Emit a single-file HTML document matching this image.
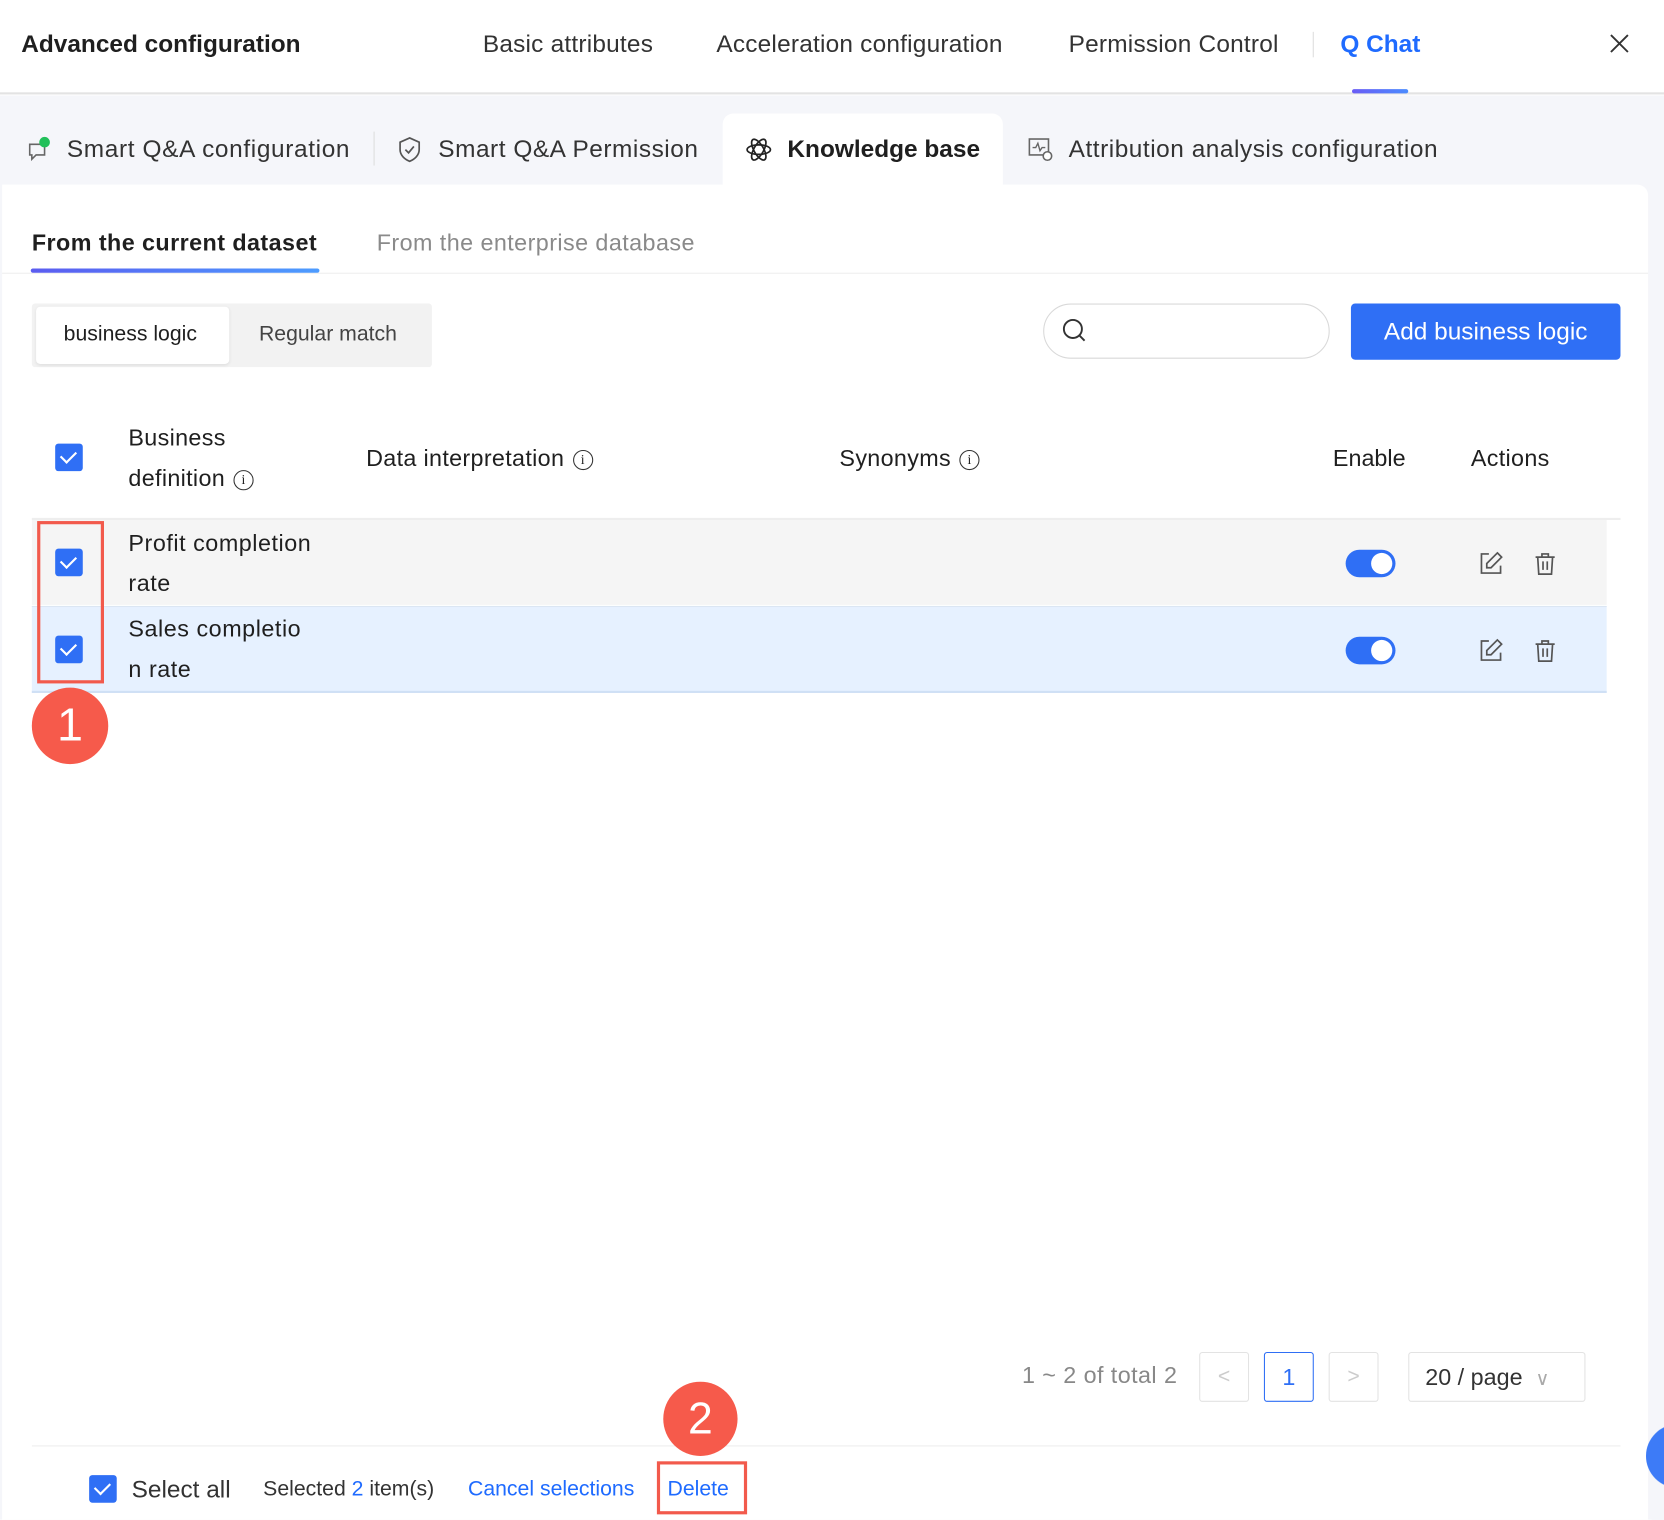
<!DOCTYPE html>
<html><head><meta charset="utf-8"><style>
*{box-sizing:border-box;margin:0;padding:0}
html,body{width:1664px;height:1520px;overflow:hidden;background:#fff}
#s{position:absolute;left:0;top:0;width:1568px;height:1432px;transform:scale(1.06122);transform-origin:0 0;font-family:"Liberation Sans",sans-serif;color:#1f1f1f}
.a{position:absolute;white-space:nowrap}
.cb{position:absolute;width:26px;height:26px;background:#2f6ff5;border-radius:3px}
.cb:after{content:"";position:absolute;left:8px;top:4px;width:7px;height:12px;border:solid #fff;border-width:0 2.5px 2.5px 0;transform:rotate(45deg)}
.tg{position:absolute;width:47px;height:26px;background:#2f6ff5;border-radius:13px}
.tg:after{content:"";position:absolute;right:3px;top:3px;width:20px;height:20px;background:#fff;border-radius:50%}
.info{display:inline-block;width:19px;height:19px;border:1.6px solid #333;border-radius:50%;font-size:13px;line-height:16px;text-align:center;vertical-align:2px;font-family:"Liberation Serif",serif;margin-left:8px}
.pb{position:absolute;border:1px solid #e3e3e3;border-radius:3px;text-align:center;color:#ccc}
</style></head><body><div id="s">
<div class="a" style="left:0;top:0;width:1568px;height:89px;border-bottom:2px solid #e3e3e3;background:#fff"></div>
<div class="a" style="left:20px;top:28px;font-size:23px;font-weight:bold">Advanced configuration</div>
<div class="a" style="left:455px;top:28px;font-size:23px;color:#333;letter-spacing:0.2px">Basic attributes</div>
<div class="a" style="left:675px;top:28px;font-size:23px;color:#333;letter-spacing:0.2px">Acceleration configuration</div>
<div class="a" style="left:1007px;top:28px;font-size:23px;color:#333;letter-spacing:0.2px">Permission Control</div>
<div class="a" style="left:1237px;top:30px;width:1px;height:24px;background:#ddd"></div>
<div class="a" style="left:1263px;top:28px;font-size:23px;color:#1f6bff;font-weight:bold">Q Chat</div>
<div class="a" style="left:1274px;top:84px;width:53px;height:4px;background:linear-gradient(90deg,#6a5cf5,#4b8cff);border-radius:2px"></div>
<svg class="a" style="left:1516px;top:31px" width="20" height="20"><path d="M2 2L18 18M18 2L2 18" stroke="#333" stroke-width="1.8"/></svg>

<div class="a" style="left:0;top:90px;width:1568px;height:1342px;background:#f5f6fa"></div>
<div class="a" style="left:681px;top:107px;width:264px;height:70px;background:#fff;border-radius:10px 10px 0 0"></div>
<div class="a" style="left:2px;top:174px;width:1551px;height:1258px;background:#fff;border-radius:0 10px 0 0"></div>

<svg class="a" style="left:24px;top:128px" width="26" height="26"><path d="M4 8h14v10H10l-4 4v-4H4z" fill="none" stroke="#666" stroke-width="1.5"/><circle cx="18" cy="6" r="5" fill="#22c05a"/></svg>
<div class="a" style="left:63px;top:127px;font-size:23px;color:#333;letter-spacing:0.6px">Smart Q&amp;A configuration</div>
<div class="a" style="left:352px;top:124px;width:1px;height:32px;background:#ddd"></div>
<svg class="a" style="left:374px;top:128px" width="24" height="26"><path d="M12 2l9 4v7c0 5-4 9-9 11-5-2-9-6-9-11V6z" fill="none" stroke="#555" stroke-width="1.6"/><path d="M8 13l3 3 5-6" fill="none" stroke="#555" stroke-width="1.6"/></svg>
<div class="a" style="left:413px;top:127px;font-size:23px;color:#333;letter-spacing:0.5px">Smart Q&amp;A Permission</div>
<svg class="a" style="left:702px;top:128px" width="26" height="26"><ellipse cx="13" cy="13" rx="11" ry="4.5" fill="none" stroke="#222" stroke-width="1.6"/><ellipse cx="13" cy="13" rx="11" ry="4.5" transform="rotate(60 13 13)" fill="none" stroke="#222" stroke-width="1.6"/><ellipse cx="13" cy="13" rx="11" ry="4.5" transform="rotate(-60 13 13)" fill="none" stroke="#222" stroke-width="1.6"/></svg>
<div class="a" style="left:742px;top:127px;font-size:23px;font-weight:bold">Knowledge base</div>
<svg class="a" style="left:968px;top:128px" width="26" height="26"><rect x="2" y="3" width="18" height="15" fill="none" stroke="#666" stroke-width="1.5"/><path d="M5 11h3l2-4 2 7 2-3h3" fill="none" stroke="#666" stroke-width="1.3"/><circle cx="19" cy="19" r="4" fill="#fff" stroke="#666" stroke-width="1.5"/></svg>
<div class="a" style="left:1007px;top:127px;font-size:23px;color:#333;letter-spacing:0.5px">Attribution analysis configuration</div>

<div class="a" style="left:30px;top:216px;font-size:22px;font-weight:bold;letter-spacing:0.4px">From the current dataset</div>
<div class="a" style="left:355px;top:216px;font-size:22px;color:#8a8a8a;letter-spacing:0.4px">From the enterprise database</div>
<div class="a" style="left:2px;top:257px;width:1551px;height:1px;background:#eee"></div>
<div class="a" style="left:29px;top:253px;width:272px;height:4px;background:linear-gradient(90deg,#5b5cf0,#4d9cff);border-radius:2px"></div>

<div class="a" style="left:30px;top:286px;width:377px;height:60px;background:#f2f2f2;border-radius:3px"></div>
<div class="a" style="left:34px;top:289px;width:182px;height:54px;background:#fff;border-radius:4px;box-shadow:0 1px 3px rgba(0,0,0,.08)"></div>
<div class="a" style="left:60px;top:304px;font-size:20px">business logic</div>
<div class="a" style="left:244px;top:304px;font-size:20px;color:#444">Regular match</div>
<div class="a" style="left:983px;top:286px;width:270px;height:52px;border:1px solid #d9d9d9;border-radius:26px"></div>
<svg class="a" style="left:1000px;top:299px" width="26" height="26"><circle cx="11" cy="11" r="8.5" fill="none" stroke="#333" stroke-width="1.8"/><path d="M17 17l5 5" stroke="#333" stroke-width="1.8"/></svg>
<div class="a" style="left:1273px;top:286px;width:254px;height:53px;background:#2f6ff5;border-radius:4px;color:#fff;font-size:23px;text-align:center;line-height:53px">Add business logic</div>

<div class="cb" style="left:52px;top:418px"></div>
<div class="a" style="left:121px;top:394px;font-size:22px;line-height:38px;letter-spacing:0.3px">Business<br>definition<span class="info">i</span></div>
<div class="a" style="left:345px;top:419px;font-size:22px;letter-spacing:0.3px">Data interpretation<span class="info">i</span></div>
<div class="a" style="left:791px;top:419px;font-size:22px;letter-spacing:0.3px">Synonyms<span class="info">i</span></div>
<div class="a" style="left:1256px;top:419px;font-size:22px">Enable</div>
<div class="a" style="left:1386px;top:419px;font-size:22px;letter-spacing:0.3px">Actions</div>
<div class="a" style="left:30px;top:488px;width:1497px;height:2px;background:#eee"></div>

<div class="a" style="left:30px;top:490px;width:1484px;height:80px;background:#f5f5f5"></div>
<div class="a" style="left:30px;top:571px;width:1484px;height:82px;background:#e6f1ff;border-top:1px solid #dbe6f3;border-bottom:2px solid #cfe0f5"></div>
<div class="cb" style="left:52px;top:517px"></div>
<div class="cb" style="left:52px;top:599px"></div>
<div class="a" style="left:121px;top:493px;font-size:22px;line-height:38px;letter-spacing:0.5px">Profit completion<br>rate</div>
<div class="a" style="left:121px;top:574px;font-size:22px;line-height:38px;letter-spacing:0.5px">Sales completio<br>n rate</div>
<div class="tg" style="left:1268px;top:518px"></div>
<div class="tg" style="left:1268px;top:600px"></div>
<svg class="a" style="left:1393px;top:519px" width="24" height="24"><path d="M10 3H3v18h18v-7" fill="none" stroke="#555" stroke-width="1.6"/><path d="M18 2l4 4-10 10H8v-4z" fill="none" stroke="#555" stroke-width="1.6"/></svg>
<svg class="a" style="left:1444px;top:519px" width="24" height="24"><path d="M3 6h18M9 6V3h6v3M5 6l1 16h12l1-16M10 10v8M14 10v8" fill="none" stroke="#555" stroke-width="1.6"/></svg>
<svg class="a" style="left:1393px;top:601px" width="24" height="24"><path d="M10 3H3v18h18v-7" fill="none" stroke="#555" stroke-width="1.6"/><path d="M18 2l4 4-10 10H8v-4z" fill="none" stroke="#555" stroke-width="1.6"/></svg>
<svg class="a" style="left:1444px;top:601px" width="24" height="24"><path d="M3 6h18M9 6V3h6v3M5 6l1 16h12l1-16M10 10v8M14 10v8" fill="none" stroke="#555" stroke-width="1.6"/></svg>

<div class="a" style="left:35px;top:491px;width:63px;height:153px;border:3px solid #f25a4c"></div>
<div class="a" style="left:30px;top:648px;width:72px;height:72px;border-radius:50%;background:#f65a4b;color:#fff;font-size:44px;text-align:center;line-height:72px">1</div>

<div class="a" style="left:963px;top:1283px;font-size:22px;color:#888;letter-spacing:0.4px">1 ~ 2 of total 2</div>
<div class="pb" style="left:1130px;top:1274px;width:47px;height:47px;line-height:45px;font-size:20px">&lt;</div>
<div class="pb" style="left:1191px;top:1274px;width:47px;height:47px;line-height:45px;font-size:22px;border-color:#2f6ff5;color:#2f6ff5">1</div>
<div class="pb" style="left:1252px;top:1274px;width:47px;height:47px;line-height:45px;font-size:20px">&gt;</div>
<div class="pb" style="left:1327px;top:1274px;width:167px;height:47px;line-height:45px;font-size:22px;color:#333;text-align:left;padding-left:15px">20 / page <span style="color:#aaa;font-size:18px;margin-left:6px">∨</span></div>

<div class="a" style="left:30px;top:1362px;width:1497px;height:1px;background:#eee"></div>
<div class="a" style="left:625px;top:1302px;width:70px;height:70px;border-radius:50%;background:#f65a4b;color:#fff;font-size:42px;text-align:center;line-height:70px">2</div>
<div class="cb" style="left:84px;top:1390px"></div>
<div class="a" style="left:124px;top:1390px;font-size:23px;color:#333">Select all</div>
<div class="a" style="left:248px;top:1392px;font-size:20px;color:#333">Selected <span style="color:#1f6bff">2</span> item(s)</div>
<div class="a" style="left:441px;top:1392px;font-size:20px;color:#1f6bff">Cancel selections</div>
<div class="a" style="left:629px;top:1392px;font-size:20px;color:#1f6bff">Delete</div>
<div class="a" style="left:619px;top:1377px;width:85px;height:50px;border:3px solid #f25a4c"></div>
<div class="a" style="left:1551px;top:1342px;width:60px;height:60px;border-radius:50%;background:#3d7bf7"></div>
</div></body></html>
